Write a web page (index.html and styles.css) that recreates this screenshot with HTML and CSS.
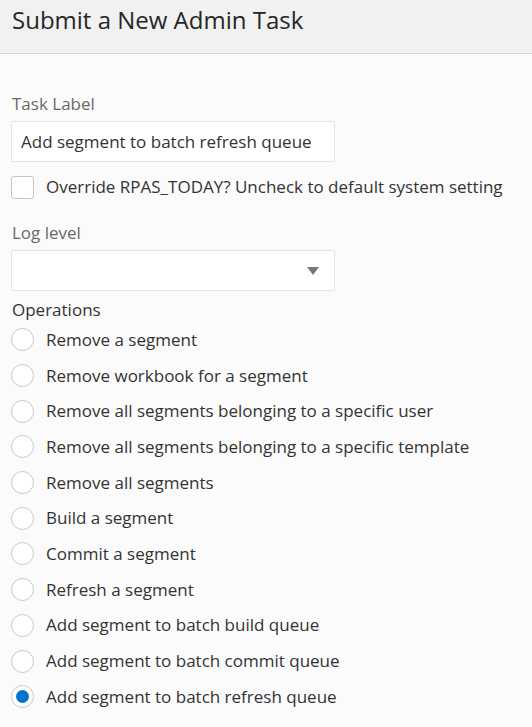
FILE: index.html
```html
<!DOCTYPE html>
<html>
<head>
<meta charset="utf-8">
<link rel="stylesheet" href="styles.css">
</head>
<body>
<header class="header">
  <h1 class="title">Submit a New Admin Task</h1>
</header>
<main class="form">
  <div class="field">
    <label class="label">Task Label</label>
    <div class="input">Add segment to batch refresh queue</div>
  </div>
  <label class="check-row">
    <span class="checkbox"></span>
    <span class="text">Override RPAS_TODAY? Uncheck to default system setting</span>
  </label>
  <div class="field field-log">
    <label class="label">Log level</label>
    <div class="select">
      <svg class="arrow" width="12" height="8" viewBox="0 0 12 8"><path d="M0 0H12L6 8Z" fill="#787878"/></svg>
    </div>
  </div>
  <div class="ops">
    <div class="ops-title">Operations</div>
    <ul class="radios">
      <li class="radio-row"><span class="radio"></span><span class="text">Remove a segment</span></li>
      <li class="radio-row"><span class="radio"></span><span class="text">Remove workbook for a segment</span></li>
      <li class="radio-row"><span class="radio"></span><span class="text">Remove all segments belonging to a specific user</span></li>
      <li class="radio-row"><span class="radio"></span><span class="text">Remove all segments belonging to a specific template</span></li>
      <li class="radio-row"><span class="radio"></span><span class="text">Remove all segments</span></li>
      <li class="radio-row"><span class="radio"></span><span class="text">Build a segment</span></li>
      <li class="radio-row"><span class="radio"></span><span class="text">Commit a segment</span></li>
      <li class="radio-row"><span class="radio"></span><span class="text">Refresh a segment</span></li>
      <li class="radio-row"><span class="radio"></span><span class="text">Add segment to batch build queue</span></li>
      <li class="radio-row"><span class="radio"></span><span class="text">Add segment to batch commit queue</span></li>
      <li class="radio-row"><span class="radio checked"></span><span class="text">Add segment to batch refresh queue</span></li>
    </ul>
  </div>
</main>
</body>
</html>
```
FILE: styles.css
```css
* { box-sizing: border-box; }
html, body {
  margin: 0;
  padding: 0;
  background: #fbfbfb;
  font-family: "Open Sans", "Noto Sans", sans-serif;
  color: #333;
}
.header {
  background: #f1f1f1;
  height: 54px;
  border-bottom: 1px solid #d6d6d6;
  padding: 4px 12px 0;
}
.title {
  margin: 0;
  font-size: 24px;
  font-weight: 400;
  line-height: 32px;
  color: #262626;
}
.form {
  padding: 38px 11px 0;
}
.field {
  display: flex;
  flex-direction: column;
}
.label {
  font-size: 17px;
  line-height: 24px;
  color: #6a6a6a;
  padding-left: 1px;
  margin-bottom: 5px;
}
.input, .select {
  width: 324px;
  height: 41px;
  background: #fff;
  border: 1px solid #e4e4e4;
  border-radius: 2px;
  font-size: 17px;
  line-height: 39px;
  padding: 0 9px;
  color: #333;
}
.select {
  display: flex;
  justify-content: flex-end;
  align-items: center;
  padding-right: 15px;
}
.arrow { display: block; }
.check-row {
  display: flex;
  align-items: center;
  gap: 12px;
  margin-top: 13px;
  height: 24px;
}
.checkbox {
  width: 23px;
  height: 23px;
  border: 1px solid #c4c4c4;
  border-radius: 3px;
  background: #fff;
  flex: none;
}
.text {
  font-size: 17px;
  line-height: 24px;
  color: #333;
}
.field-log { margin-top: 22px; }
.ops { margin-top: 7px; }
.ops-title {
  font-size: 17px;
  line-height: 24px;
  color: #333;
  padding-left: 1px;
}
.radios {
  list-style: none;
  margin: 0;
  padding: 0;
}
.radio-row {
  display: flex;
  align-items: center;
  gap: 12px;
  height: 35.7px;
}
.radio {
  width: 23px;
  height: 23px;
  border: 1px solid #c8c8c8;
  border-radius: 50%;
  background: #fff;
  flex: none;
  display: flex;
  align-items: center;
  justify-content: center;
}
.radio.checked::after {
  content: "";
  width: 13px;
  height: 13px;
  border-radius: 50%;
  background: #0572ce;
}
```
